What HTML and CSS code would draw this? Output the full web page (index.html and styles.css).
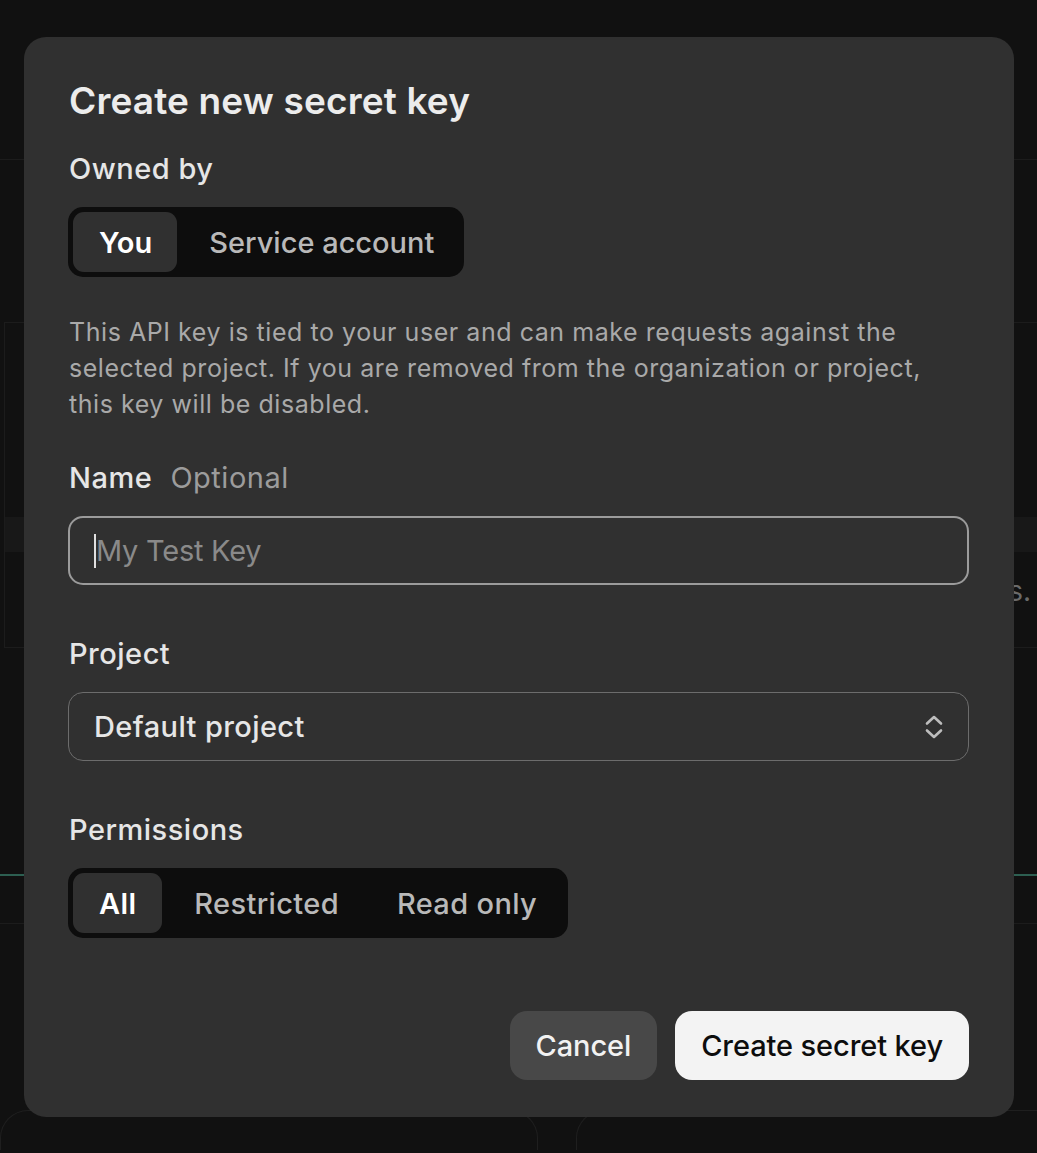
FILE: index.html
```html
<!DOCTYPE html>
<html lang="en">
<head>
<meta charset="utf-8">
<title>Create new secret key</title>
<link rel="stylesheet" href="styles.css">
</head>
<body>
<div class="page">
  <div class="topbar"></div>
  <div class="gap-a"></div>
  <section class="panel">
    <div class="panel-head"></div>
    <div class="panel-band"></div>
    <p class="panel-text">API keys are listed here. Do not share your API keys.</p>
  </section>
  <div class="gap-b"></div>
  <div class="accent-line"></div>
  <div class="row-line"></div>
  <div class="gap-c"></div>
  <div class="cards">
    <div class="card"></div>
    <div class="card"></div>
  </div>
</div>

<div class="overlay">
  <div class="modal" role="dialog" aria-labelledby="dlg-title">
    <h1 class="title" id="dlg-title">Create new secret key</h1>

    <div class="label">Owned by</div>
    <div class="seg">
      <span class="seg-btn is-active">You</span>
      <span class="seg-btn">Service account</span>
    </div>

    <p class="desc">This API key is tied to your user and can make requests against the selected project. If you are removed from the organization or project, this key will be disabled.</p>

    <div class="label label-name">Name <span class="optional">Optional</span></div>
    <div class="field field-focus">
      <span class="caret"></span><span class="placeholder">My Test Key</span>
    </div>

    <div class="label label-gap">Project</div>
    <div class="field field-select">
      <span class="value">Default project</span>
      <svg class="chev" width="20" height="28" viewBox="0 0 20 28" aria-hidden="true">
        <path d="M3 10.5 L10 4 L17 10.5" fill="none" stroke="#bdbdbd" stroke-width="2.6" stroke-linecap="round" stroke-linejoin="round"/>
        <path d="M3 17.5 L10 24 L17 17.5" fill="none" stroke="#bdbdbd" stroke-width="2.6" stroke-linecap="round" stroke-linejoin="round"/>
      </svg>
    </div>

    <div class="label label-gap">Permissions</div>
    <div class="seg seg-perm">
      <span class="seg-btn is-active">All</span>
      <span class="seg-btn">Restricted</span>
      <span class="seg-btn">Read only</span>
    </div>

    <div class="actions">
      <button class="btn btn-secondary" type="button">Cancel</button>
      <button class="btn btn-primary" type="button">Create secret key</button>
    </div>
  </div>
</div>
</body>
</html>
```

FILE: styles.css
```css
* { box-sizing: border-box; }

html, body {
  margin: 0;
  padding: 0;
  background: #111111;
  height: 100%;
  overflow: hidden;
  font-family: Inter, "Noto Sans", "Liberation Sans", sans-serif;
}

/* ---------- background page (mostly hidden) ---------- */
.page {
  width: 1037px;
  height: 1153px;
  display: flex;
  flex-direction: column;
  overflow: hidden;
}
.topbar {
  height: 160px;
  border-bottom: 1px solid #1c1c1c;
  flex: none;
}
.gap-a { height: 162px; flex: none; }
.panel {
  margin-left: 4px;
  height: 326px;
  border-top: 1px solid #1c1c1c;
  border-left: 1px solid #1c1c1c;
  border-bottom: 1px solid #1c1c1c;
  display: flex;
  flex-direction: column;
  flex: none;
}
.panel-head { height: 194px; }
.panel-band { height: 35px; background: #181818; }
.panel-text {
  margin: 22px 0 0;
  text-align: right;
  font-size: 28px;
  color: #6a6a6a;
  white-space: nowrap;
  padding-right: 6px;
}
.gap-b { height: 226px; flex: none; }
.accent-line { height: 2px; background: #2d5f51; flex: none; }
.row-line { height: 48px; border-bottom: 1px solid #1c1c1c; flex: none; }
.gap-c { height: 186px; flex: none; }
.cards {
  display: flex;
  gap: 38px;
  flex: none;
}
.card {
  flex: none;
  width: 538px;
  height: 40px;
  border: 1px solid #1f1f1f;
  border-bottom: none;
  border-radius: 28px 28px 0 0;
}

/* ---------- overlay + modal ---------- */
.overlay {
  position: fixed;
  inset: 0;
  display: flex;
  align-items: flex-start;
  justify-content: flex-start;
  padding: 37px 0 0 24px;
}
.modal {
  width: 990px;
  background: #303030;
  border-radius: 22px;
  padding: 42px 45px 37px 44px;
  display: flex;
  flex-direction: column;
  align-items: flex-start;
  color: #ececec;
}

.title {
  margin: 0 0 28px 1px;
  font-size: 37px;
  line-height: 44px;
  font-weight: 600;
  letter-spacing: 0.15px;
  color: #ececec;
}

.label {
  font-size: 29px;
  line-height: 36px;
  font-weight: 500;
  letter-spacing: 0.5px;
  color: #e6e6e6;
  margin: 0 0 20px 1px;
}
.label-name { margin-top: 38px; }
.label-gap { margin-top: 51px; }
.optional {
  font-weight: 400;
  color: #9c9c9c;
  margin-left: 10px;
}

/* segmented control */
.seg {
  display: inline-flex;
  gap: 6px;
  padding: 5px;
  height: 70px;
  background: #0d0d0d;
  border-radius: 15px;
}
.seg-btn {
  height: 60px;
  padding: 0 25px 0 26px;
  display: flex;
  align-items: center;
  border-radius: 11px;
  font-size: 29px;
  font-weight: 500;
  letter-spacing: 0;
  color: #b9b9b9;
}
.seg-perm .seg-btn { letter-spacing: 0.35px; padding: 0 26px 0 26px; }
.seg-btn.is-active {
  background: #303030;
  color: #ffffff;
  font-weight: 600;
}

.desc {
  margin: 37px 0 0 1px;
  font-size: 25px;
  line-height: 36px;
  color: #a9a9a9;
  max-width: 880px;
  letter-spacing: 0.55px;
}

/* inputs */
.field {
  width: 901px;
  height: 69px;
  border-radius: 15px;
  display: flex;
  align-items: center;
  padding: 0 26px 0 25px;
  font-size: 29px;
}
.field-focus {
  border: 2px solid #9b9b9b;
  padding-left: 24px;
}
.caret {
  width: 2px;
  height: 34px;
  background: #e0e0e0;
}
.placeholder { color: #8a8a8a; letter-spacing: -0.25px; }

.field-select {
  border: 1.5px solid #6c6c6c;
  justify-content: space-between;
  padding-right: 24px;
}
.value { color: #e6e6e6; font-weight: 500; letter-spacing: 0.4px; }
.chev { display: block; }

/* actions */
.actions {
  align-self: stretch;
  display: flex;
  justify-content: flex-end;
  gap: 18px;
  margin-top: 73px;
}
.btn {
  height: 69px;
  padding: 0 26px;
  border: none;
  border-radius: 17px;
  font-family: inherit;
  font-size: 29px;
  font-weight: 500;
  letter-spacing: -0.1px;
  cursor: pointer;
}
.btn-secondary { background: #484848; color: #f2f2f2; }
.btn-primary { background: #f3f3f3; color: #0d0d0d; }
```
